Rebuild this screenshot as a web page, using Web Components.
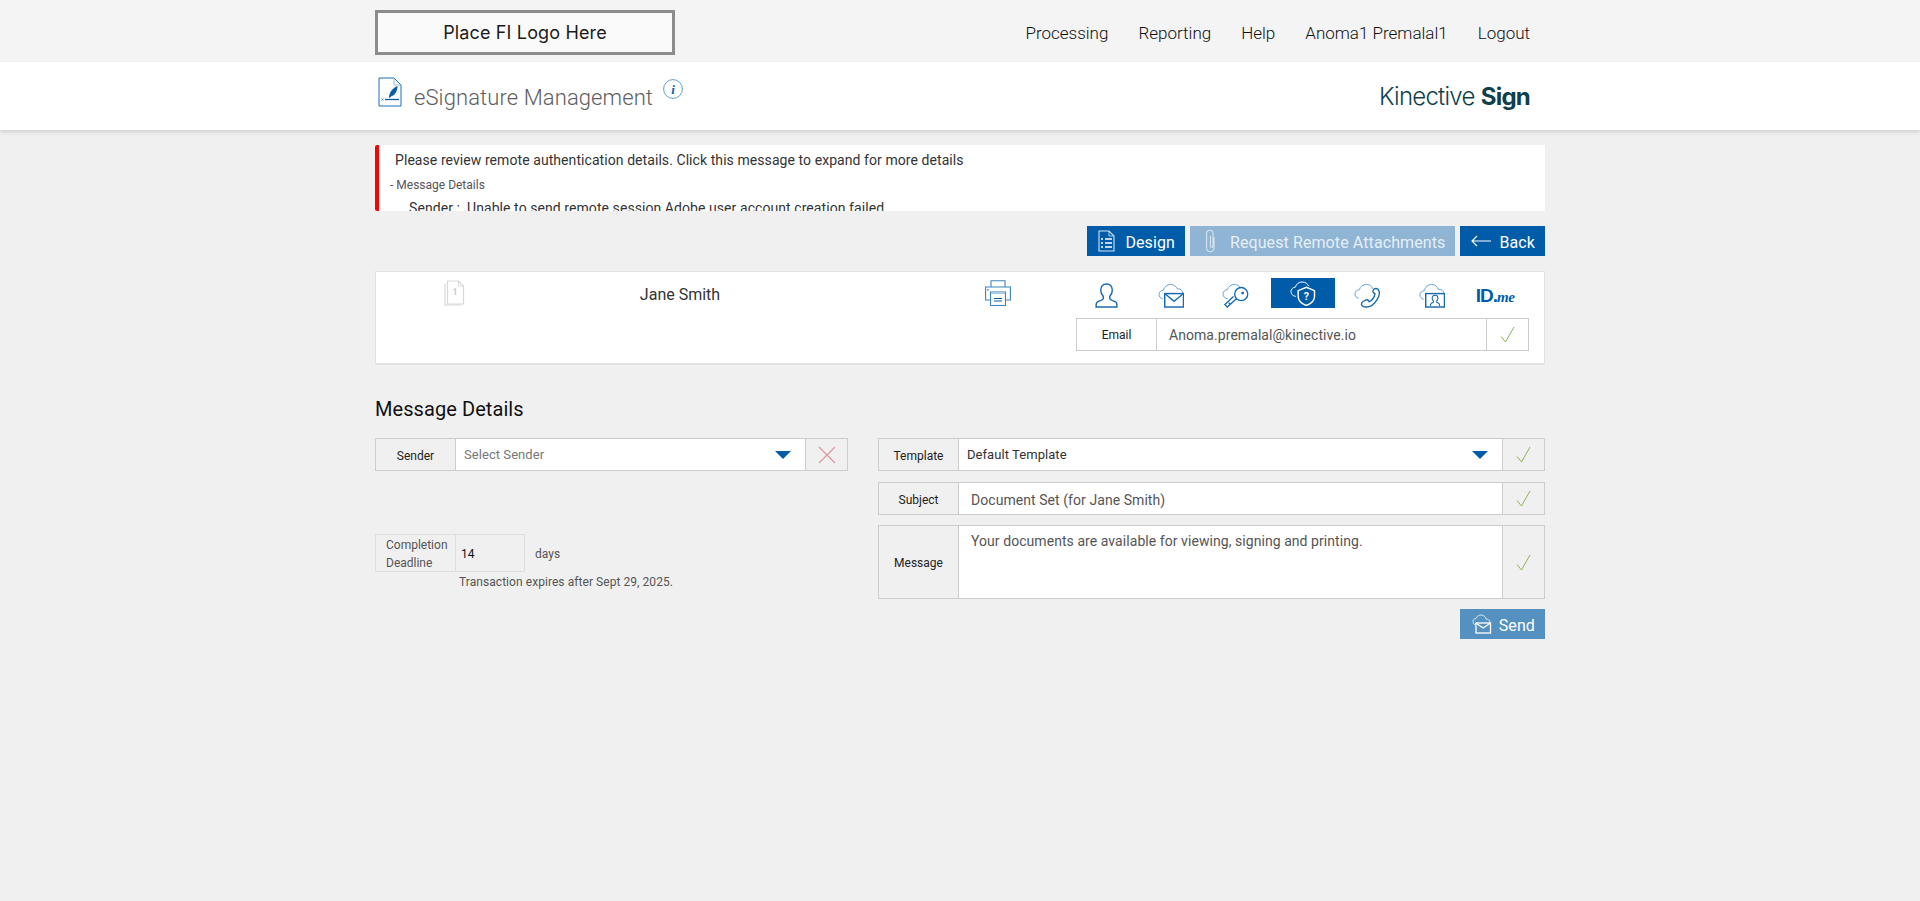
<!DOCTYPE html>
<html lang="en">
<head>
<meta charset="utf-8">
<title>eSignature Management</title>
<style>
  html, body {
    margin: 0;
    min-height: 100%;
    background: #f0f0f0;
    font-family: Roboto, "Liberation Sans", sans-serif;
    color: #333;
  }
</style>
</head>
<body>
  <top-bar>
    <nav-link>Processing</nav-link>
    <nav-link>Reporting</nav-link>
    <nav-link>Help</nav-link>
    <nav-link>Anoma1 Premalal1</nav-link>
    <nav-link>Logout</nav-link>
  </top-bar>
  <title-bar heading="eSignature Management"></title-bar>
  <page-body>
    <alert-message>
      <span slot="title">Please review remote authentication details. Click this message to expand for more details</span>
      <span slot="summary">- Message Details</span>
      <span>Sender :&nbsp; Unable to send remote session Adobe user account creation failed</span>
    </alert-message>
    <action-bar>
      <action-button icon="design">Design</action-button>
      <action-button icon="clip" disabled>Request Remote Attachments</action-button>
      <action-button icon="back">Back</action-button>
    </action-bar>
    <recipient-card name="Jane Smith" email="Anoma.premalal@kinective.io"></recipient-card>
    <message-details></message-details>
  </page-body>

<script>
/**
 * Icon drawings, shared by every element through the kin-icon element.
 * Strokes use currentColor, the lighter cloud uses --cloud.
 */
const CLOUD = 'fill="none" stroke="var(--cloud, #5f9fd2)" stroke-width="1"'
const LINE = 'fill="none" stroke="currentColor" stroke-width="1.4"'
const icons = {
  sign: ['24 30', `<path d="M1 1h15l7 7v21H1z" fill="#fff" stroke="#1b6db5" stroke-width="1"/><path d="M16 1v7h7" fill="none" stroke="#7fb0da" stroke-width=".8"/><path d="M11 20.500c0-5 3.500-9.500 8.500-11.500 0 5-2 9-6.500 10.500l-1.500 1.500z" fill="#0a5ea8"/><path d="M7 22.500h14" stroke="#0a5ea8" stroke-width="1.300"/><path d="M3.500 21.500l2 2m0-2l-2 2" stroke="#0a5ea8" stroke-width=".7"/>`],
  info: ['20 20', `<circle cx="10" cy="10" r="9.400" fill="#fff" stroke="#5f9fd2"/><text x="10" y="14.500" text-anchor="middle" font-family="Liberation Serif, serif" font-style="italic" font-weight="700" font-size="13" fill="#0a5ea8">i</text>`],
  design: ['17 22', `<path d="M1 1h10l5 5v15H1z" fill="none" stroke="#d5e4f2" stroke-width="1.100"/><path d="M11 1v5h5" fill="none" stroke="#d5e4f2" stroke-width=".8"/><path d="M3 9h2M3 13h2M3 17h2M7 9h7M7 13h7M7 17h7" stroke="#fff" stroke-width="1.300"/>`],
  clip: ['11 24', `<path d="M9 8v11a3.700 3.700 0 0 1-7.400 0V4.500a3.200 3.200 0 0 1 6.400 0V17a1.300 1.300 0 0 1-2.600 0V7" fill="none" stroke="#d7e5f1" stroke-width="1.100"/>`],
  back: ['21 12', `<path d="M21 6H2M7 1L2 6l5 5" fill="none" stroke="#fff" stroke-width="1.200"/>`],
  send: ['20 20', `<path d="M3 11C1.500 10 1 8.500 1 7.500 1 5.500 2.500 4.500 4 4.500 5 2 7 1 9 1c2.500 0 4.500 1.500 5 4 2 0 4 1.500 4 3" fill="none" stroke="#e3eef7" stroke-width=".9"/><rect x="4" y="9" width="14.500" height="10" fill="none" stroke="#fff" stroke-width="1.300"/><path d="M4 9l7 5 7.500-5" fill="none" stroke="#fff" stroke-width="1.300"/>`],
  doc: ['21 26', `<path d="M1 3.500V25h16" fill="none" stroke="#d8d8d8" stroke-width="1.200"/><path d="M3.500 1h11l5 5v18h-16z" fill="#fff" stroke="#d8d8d8" stroke-width="1.200"/><path d="M14.500 1v5h5" fill="none" stroke="#d8d8d8"/><text x="11" y="15" text-anchor="middle" font-family="Roboto, sans-serif" font-weight="700" font-size="9" fill="#ccc">1</text>`],
  print: ['26 26', `<path d="M6 7V.7h14V7" fill="none" stroke="#3d85c0" stroke-width="1.100"/><path d="M5 20H.6V7h24.800v13H21" fill="#fff" stroke="#3d85c0" stroke-width="1.100"/><rect x="2.200" y="9" width="1.500" height="1.500" fill="#3d85c0"/><rect x="5.500" y="12" width="15" height="13.500" fill="#fff" stroke="#3d85c0" stroke-width="1.100"/><rect x="6" y="12" width="14" height="2" fill="#a9c9e4"/><path d="M9 18.500h8M9 21h8" stroke="#0a5ea8" stroke-width="1.200"/>`],
  person: ['24 26', `<path d="M12 1C8 1 6 4 6 7.500c0 3 1.200 5 2.600 6.300V16c0 1-1 1.600-3 2.300C3 19.100 1.200 20 1.200 22.300V25h21.600v-2.700c0-2.300-1.800-3.200-4.400-4-2-.7-3-1.300-3-2.300v-2.200C16.800 12.500 18 10.500 18 7.500 18 4 16 1 12 1z" fill="none" stroke="currentColor" stroke-width="1.500"/>`],
  mail: ['28 26', `<path d="M5 16.500C2.500 16 1 14 1 12c0-2.500 2-4.500 4.500-4.500C6.500 4 9.500 1.500 13 1.500c3.500 0 6 2 7 4.500 3-.3 5.500 1.500 6 4.500" ${CLOUD}/><rect x="7" y="11" width="19.500" height="14" fill="#fff" stroke="currentColor" stroke-width="1.500"/><path d="M7 11l9.700 8L26.500 11" ${LINE}/>`],
  key: ['28 26', `<path d="M6 16.500C3 16 1 14 1 11.500 1 9 3 7 5.500 7 6.500 3.500 9.500 1.500 13 1.500c3 0 5.500 1.500 6.500 4" ${CLOUD}/><circle cx="20" cy="11.500" r="6.800" fill="#fff" stroke="currentColor" stroke-width="1.400"/><circle cx="21.500" cy="10.500" r="1.500" fill="currentColor"/><path d="M15 16.500L5.500 25l-2.500-2.500 9-8.500M7 20.500l2 2" ${LINE}/>`],
  shield: ['28 26', `<path d="M6 16C3 15.800 1 13.500 1 11c0-2.500 2-4.500 4.500-4.500C6.500 3 9.500 1 12.500 1c3.500 0 6 2 7 4.500" fill="none" stroke="#fff" stroke-width="1"/><path d="M17 6.500l8.500 3.500v6c0 4.500-3.500 7.500-8.500 9.500-5-2-8.500-5-8.500-9.500v-6z" fill="#005ca9" stroke="#fff" stroke-width="1.500"/><text x="17" y="19.500" text-anchor="middle" font-family="Roboto, sans-serif" font-weight="700" font-size="11" fill="#fff">?</text>`],
  phone: ['28 26', `<path d="M5 16C2.500 15.500 1 13.500 1 11.500 1 9 3 7 5.500 7 6.500 3.500 9.500 1.500 13 1.500c3 0 5.500 1.500 6.500 4.500" ${CLOUD}/><path d="M21 6c1.500-.5 3-.3 4 .5 1.800 2 1.800 6-.8 10.500-3 5-7.500 8-11.500 8-2.300 0-4.700-1-5-3 0-1 .5-2 2-3l3-1.500c1-.3 1.800 0 2.300.7l.8 1.300c3-1.500 5.500-5 6-8.500l-1.300-.7c-.8-.5-1-1.300-.8-2.300z" fill="#fff" stroke="currentColor" stroke-width="1.400"/>`],
  video: ['28 26', `<path d="M5 17C2.500 16.500 1 14.500 1 12.500 1 10 3 8 5.500 8 6.500 4 9.500 1.500 13 1.500c3.500 0 6 2 7 5 3-.3 5.500 1.500 6 4.500" ${CLOUD}/><rect x="7" y="11" width="19.500" height="14" fill="#fff" stroke="currentColor" stroke-width="1.500"/><path d="M12 24v-1.500c0-1.300 1.500-2 3-2.500v-1.300c-1-.8-1.300-1.800-1.300-3 0-1.700 1-3 3-3s3 1.300 3 3c0 1.200-.3 2.200-1.300 3V20c1.500.5 3 1.200 3 2.500V24" fill="none" stroke="currentColor" stroke-width="1.100"/>`],
  check: ['15 17', `<path d="M1 10.500l4.500 5.500L14 1" fill="none" stroke="#8db35c" stroke-width="1"/>`],
  cross: ['18 18', `<path d="M1 1l16 16M17 1L1 17" fill="none" stroke="#e2929c" stroke-width="1.100"/>`],
  caret: ['16 8', `<path d="M0 0h16L8 8z" fill="#005ca9"/>`]
}

/**
 * Shorthand for a template from a string of markup.
 *
 * @param {string} html The markup of the shadow root.
 * @returns {HTMLTemplateElement} The template.
 */
function makeTemplate (html) {
  const template = document.createElement('template')
  template.innerHTML = html
  return template
}

/**
 * Base class, clones the static template of the subclass into an open shadow root.
 */
class ShadowElement extends HTMLElement {
  /**
   * Creates the shadow root.
   */
  constructor () {
    super()
    this.attachShadow({ mode: 'open' })
    if (this.constructor.template) {
      this.shadowRoot.appendChild(this.constructor.template.content.cloneNode(true))
    }
  }
}

/**
 * Draws one icon out of the icons table. Height comes from the size attribute.
 */
customElements.define('kin-icon', class extends ShadowElement {
  /**
   * Attributes to watch.
   *
   * @returns {string[]} The attribute names.
   */
  static get observedAttributes () {
    return ['name']
  }

  /**
   * Draws the svg when the name is set.
   */
  attributeChangedCallback () {
    const [box, body] = icons[this.getAttribute('name')]
    const [w, h] = box.split(' ').map(Number)
    const height = Number(this.getAttribute('size')) || h
    this.shadowRoot.innerHTML = `
      <style>
        :host { display: inline-flex; flex: none; line-height: 0; }
      </style>
      <svg width="${height * w / h}" height="${height}" viewBox="0 0 ${w} ${h}">${body}</svg>`
  }
})

customElements.define('nav-link', class extends ShadowElement {
  static template = makeTemplate(`
    <style>
      :host {
        display: block;
        font-size: 17px;
        font-weight: 300;
        color: #111;
        white-space: nowrap;
      }
    </style>
    <slot></slot>`)
})

customElements.define('top-bar', class extends ShadowElement {
  static template = makeTemplate(`
    <style>
      :host {
        display: block;
        height: 62px;
        background: #f4f4f4;
      }
      .inner {
        width: 1170px;
        height: 100%;
        margin: 0 auto;
        display: flex;
        align-items: flex-start;
        justify-content: space-between;
      }
      .logo {
        box-sizing: border-box;
        width: 300px;
        height: 45px;
        margin-top: 10px;
        border: 3px solid #8c8c8c;
        background: #fafafa;
        display: flex;
        align-items: center;
        justify-content: center;
        font: 400 18px Inter, sans-serif;
        letter-spacing: .15px;
        color: #1b1b1b;
      }
      nav {
        display: flex;
        gap: 30px;
        padding: 23px 15px 0 0;
      }
    </style>
    <div class="inner">
      <div class="logo">Place FI Logo Here</div>
      <nav><slot></slot></nav>
    </div>`)
})

customElements.define('title-bar', class extends ShadowElement {
  static template = makeTemplate(`
    <style>
      :host {
        display: block;
        height: 68px;
        background: #fff;
        box-shadow: 0 2px 4px rgba(0, 0, 0, .14);
      }
      .inner {
        box-sizing: border-box;
        width: 1170px;
        height: 100%;
        margin: 0 auto;
        display: flex;
        align-items: flex-start;
      }
      .sign { margin: 15px 0 0 3px; }
      h1 {
        margin: 22px 0 0 12px;
        font-size: 22px;
        line-height: 28px;
        font-weight: 300;
        letter-spacing: .1px;
        color: #5e5e5e;
        white-space: nowrap;
      }
      .info { margin: 17px 0 0 10px; }
      .brand {
        margin: 20px 15px 0 auto;
        font: 300 24px/30px Inter, sans-serif;
        letter-spacing: -.75px;
        color: #0f3f4b;
        white-space: nowrap;
      }
      .brand b { font-weight: 700; }
    </style>
    <div class="inner">
      <kin-icon class="sign" name="sign"></kin-icon>
      <h1></h1>
      <kin-icon class="info" name="info"></kin-icon>
      <div class="brand">Kinective <b>Sign</b></div>
    </div>`)

  /**
   * Sets the heading text.
   */
  connectedCallback () {
    this.shadowRoot.querySelector('h1').textContent = this.getAttribute('heading')
  }
})

customElements.define('page-body', class extends ShadowElement {
  static template = makeTemplate(`
    <style>
      :host {
        display: block;
        width: 1170px;
        margin: 0 auto;
        padding-top: 15px;
      }
    </style>
    <slot></slot>`)
})

customElements.define('alert-message', class extends ShadowElement {
  static template = makeTemplate(`
    <style>
      :host {
        display: block;
        box-sizing: border-box;
        height: 66px;
        overflow: hidden;
        background: #fff;
        border-left: 4px solid #f00;
        border-radius: 2px 0 0 2px;
        font-size: 14px;
        letter-spacing: .07px;
        color: #333;
      }
      .title { padding: 5px 0 0 16px; line-height: 20px; }
      .summary { padding: 6px 0 0 11px; font-size: 12px; line-height: 18px; letter-spacing: 0; color: #555; }
      .detail { padding: 4px 0 0 30px; line-height: 20px; }
    </style>
    <div class="title"><slot name="title"></slot></div>
    <div class="summary"><slot name="summary"></slot></div>
    <div class="detail"><slot></slot></div>`)
})

customElements.define('action-bar', class extends ShadowElement {
  static template = makeTemplate(`
    <style>
      :host {
        display: flex;
        justify-content: flex-end;
        gap: 5px;
        margin: 15px 0;
      }
    </style>
    <slot></slot>`)
})

customElements.define('action-button', class extends ShadowElement {
  static template = makeTemplate(`
    <style>
      :host {
        display: inline-flex;
        align-items: center;
        box-sizing: border-box;
        height: 30px;
        padding: 0 10px 0 11px;
        gap: 10px;
        background: #005ca9;
        color: #fff;
        font-size: 16px;
        letter-spacing: .1px;
        white-space: nowrap;
      }
      :host([disabled]) { background: #8fb4d4; color: #e6eff7; padding-left: 15px; gap: 14px; }
      :host([icon="back"]) { padding-left: 10px; gap: 8px; }
      :host([faded]) { background: #5490c0; gap: 7px; padding: 0 10px 0 12px; }
      .label { position: relative; top: 1px; }
    </style>
    <kin-icon></kin-icon>
    <span class="label"><slot></slot></span>`)

  /**
   * Passes the icon name on to the inner icon.
   */
  connectedCallback () {
    this.shadowRoot.querySelector('kin-icon').setAttribute('name', this.getAttribute('icon'))
  }
})

customElements.define('field-row', class extends ShadowElement {
  static template = makeTemplate(`
    <style>
      :host {
        display: grid;
        grid-template-columns: 80px 1fr 42px;
        box-sizing: border-box;
        height: var(--row-height, 33px);
        border: 1px solid #ccc;
        background: var(--label-bg, #f0f0f0);
      }
      .label, .end {
        display: flex;
        align-items: center;
        justify-content: center;
      }
      .label {
        box-sizing: border-box;
        padding-top: var(--label-shift, 0);
        border-right: 1px solid #ccc;
        font-size: 12px;
        color: #222;
      }
      .end { border-left: 1px solid #ccc; }
      .value {
        display: flex;
        align-items: var(--value-align, center);
        justify-content: space-between;
        box-sizing: border-box;
        padding: var(--value-padding, 0 12px);
        background: #fff;
        font-size: var(--value-size, 14px);
        letter-spacing: .06px;
        color: var(--value-color, #555);
        white-space: nowrap;
      }
    </style>
    <div class="label" part="label"></div>
    <div class="value"><slot></slot></div>
    <div class="end"><slot name="end"></slot></div>`)

  /**
   * Sets the label text.
   */
  connectedCallback () {
    this.shadowRoot.querySelector('.label').textContent = this.getAttribute('label')
  }
})

customElements.define('recipient-card', class extends ShadowElement {
  static template = makeTemplate(`
    <style>
      :host {
        display: block;
        box-sizing: border-box;
        height: 94px;
        background: #fff;
        border: 1px solid #e2e2e2;
        border-bottom-width: 2px;
      }
      .inner {
        display: grid;
        grid-template-columns: 160px 288px 252px 453px;
        align-items: start;
      }
      .doc { justify-self: center; margin: 8px 3px 0 0; }
      .name { justify-self: center; margin-top: 13px; font-size: 16px; line-height: 20px; color: #333; }
      .print { margin: 8px 0 0 161px; justify-self: start; }
      .tabs {
        display: grid;
        grid-template-columns: repeat(7, 1fr);
        height: 30px;
        margin: 6px 0 10px -2px;
        color: #1769b0;
      }
      .tab {
        display: flex;
        align-items: flex-end;
        justify-content: center;
        height: 30px;
      }
      .tab.active {
        align-items: center;
        width: 64px;
        margin-left: 3px;
        background: #005ca9;
        color: #fff;
      }
      .id {
        align-self: end;
        margin-right: 3px;
        color: #005ca9;
        font: 700 19px/24px "Liberation Sans", sans-serif;
        letter-spacing: -1px;
        white-space: nowrap;
      }
      .id i {
        font: italic 700 15px "Liberation Serif", serif;
        letter-spacing: -.3px;
      }
      field-row { --label-bg: #fff; }
    </style>
    <div class="inner">
      <kin-icon class="doc" name="doc"></kin-icon>
      <div class="name"></div>
      <kin-icon class="print" name="print"></kin-icon>
      <div class="right">
        <div class="tabs">
          <div class="tab"><kin-icon size="25" name="person"></kin-icon></div>
          <div class="tab"><kin-icon size="25" name="mail"></kin-icon></div>
          <div class="tab"><kin-icon size="25" name="key"></kin-icon></div>
          <div class="tab active"><kin-icon size="25" name="shield" style="--cloud:#fff"></kin-icon></div>
          <div class="tab"><kin-icon size="25" name="phone"></kin-icon></div>
          <div class="tab"><kin-icon size="25" name="video"></kin-icon></div>
          <div class="tab"><span class="id">ID.<i>me</i></span></div>
        </div>
        <field-row label="Email">
          <span class="email"></span>
          <kin-icon slot="end" name="check"></kin-icon>
        </field-row>
      </div>
    </div>`)

  /**
   * Fills in the recipient's name and email.
   */
  connectedCallback () {
    this.shadowRoot.querySelector('.name').textContent = this.getAttribute('name')
    this.shadowRoot.querySelector('.email').textContent = this.getAttribute('email')
  }
})

customElements.define('message-details', class extends ShadowElement {
  static template = makeTemplate(`
    <style>
      :host { display: block; margin-top: 31px; }
      h2 {
        margin: 0 0 16px;
        font-size: 20px;
        line-height: 26px;
        font-weight: 400;
        letter-spacing: .07px;
        color: #111;
      }
      .columns {
        display: grid;
        grid-template-columns: 473px 667px;
        column-gap: 30px;
        align-items: start;
      }
      field-row { --label-shift: 2px; }
      .stack { display: flex; flex-direction: column; gap: 11px; }
      .subject { --value-padding: 2px 12px 0; }
      .message { margin-top: -1px; --row-height: 74px; --value-align: flex-start; --value-padding: 7px 12px; }
      .select { --value-padding: 0 14px 0 8px; --value-size: 13px; --value-color: #333; }
      .sender { --value-color: #777; }
      .foot { display: flex; justify-content: flex-end; margin-top: 10px; }
      .deadline {
        display: flex;
        align-items: center;
        margin-top: 63px;
        font-size: 12px;
        color: #555;
      }
      .deadline .label {
        box-sizing: border-box;
        width: 81px;
        height: 38px;
        padding: 1px 0 0 10px;
        border: 1px solid #ddd;
        line-height: 18px;
      }
      .deadline .days {
        box-sizing: border-box;
        display: flex;
        align-items: center;
        width: 69px;
        height: 38px;
        padding: 2px 0 0 5px;
        border: 1px solid #ddd;
        border-left: 0;
        color: #111;
      }
      .deadline .unit { margin: 2px 0 0 10px; }
      .expires { margin: 1px 0 0 84px; font-size: 12px; line-height: 18px; letter-spacing: .06px; color: #555; }
    </style>
    <h2>Message Details</h2>
    <div class="columns">
      <div>
        <field-row class="select sender" label="Sender">
          <span>Select Sender</span><kin-icon name="caret"></kin-icon>
          <kin-icon slot="end" name="cross"></kin-icon>
        </field-row>
        <div class="deadline">
          <div class="label">Completion Deadline</div>
          <div class="days">14</div>
          <div class="unit">days</div>
        </div>
        <div class="expires">Transaction expires after Sept 29, 2025.</div>
      </div>
      <div>
        <div class="stack">
          <field-row class="select" label="Template">
            <span>Default Template</span><kin-icon name="caret"></kin-icon>
            <kin-icon slot="end" name="check"></kin-icon>
          </field-row>
          <field-row class="subject" label="Subject">
            <span>Document Set (for Jane Smith)</span>
            <kin-icon slot="end" name="check"></kin-icon>
          </field-row>
          <field-row class="message" label="Message">
            <span>Your documents are available for viewing, signing and printing.</span>
            <kin-icon slot="end" name="check"></kin-icon>
          </field-row>
        </div>
        <div class="foot"><action-button icon="send" faded>Send</action-button></div>
      </div>
    </div>`)
})
</script>
</body>
</html>
